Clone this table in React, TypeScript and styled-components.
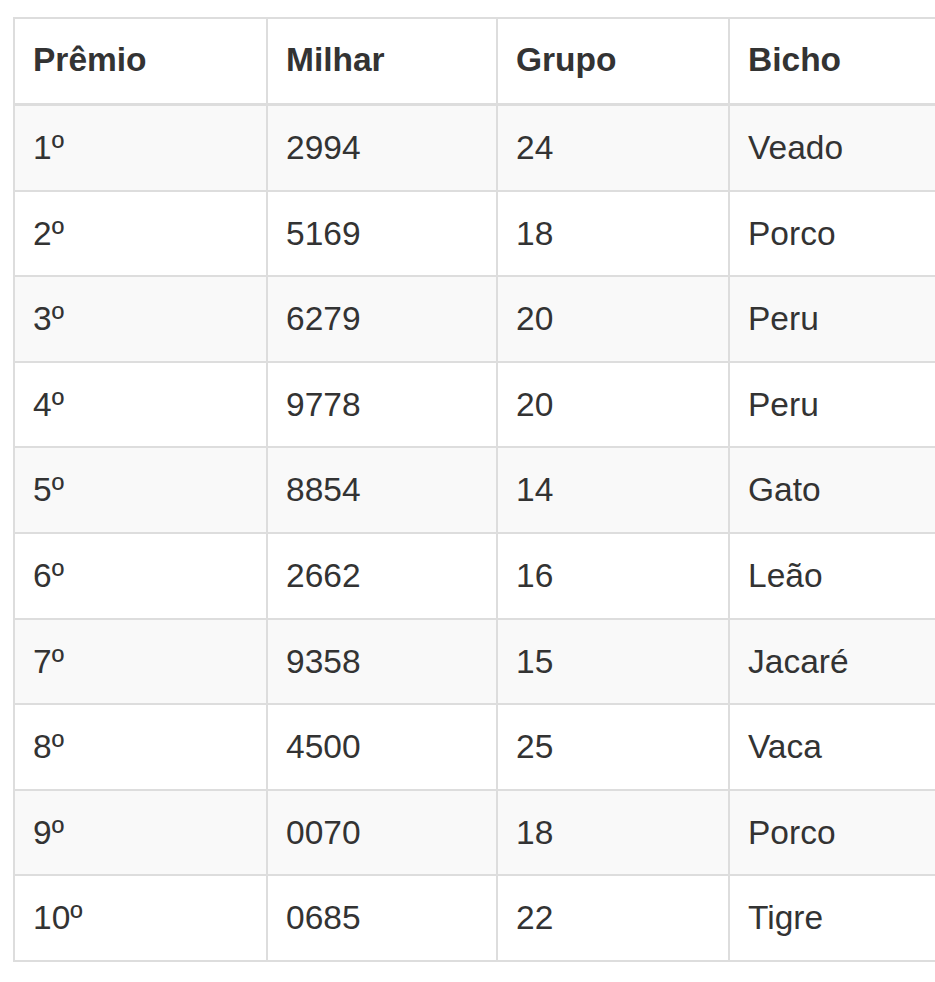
import React from "react";
import styled, { createGlobalStyle } from "styled-components";

const Global = createGlobalStyle`
  html, body {
    margin: 0;
    padding: 0;
    background: #ffffff;
    overflow: hidden;
  }
  body {
    font-family: "Liberation Sans", Arial, sans-serif;
    color: #333333;
  }
`;

const Page = styled.div`
  padding: 17px 0 0 13px;
  width: 922px;
  overflow: hidden;
`;

const Table = styled.table`
  width: 1037px;
  min-width: 1037px;
  border-spacing: 0;
  border-left: 2px solid #dddddd;
  border-top: 2px solid #dddddd;
  table-layout: fixed;
  font-size: 33.5px;
  line-height: 48px;
`;

const HeadCell = styled.th<{ $w: number }>`
  box-sizing: border-box;
  width: ${(p) => p.$w}px;
  height: 87px;
  padding: 17px 17px 0 18px;
  text-align: left;
  vertical-align: top;
  font-weight: 700;
  color: #333333;
  border-right: 2px solid #dddddd;
  border-bottom: 3px solid #dddddd;
`;

const Row = styled.tr<{ $striped: boolean }>`
  background: ${(p) => (p.$striped ? "#f9f9f9" : "#ffffff")};
`;

const Cell = styled.td`
  box-sizing: border-box;
  height: 85.6px;
  padding: 18px 17px 0 18px;
  vertical-align: top;
  font-weight: 400;
  color: #333333;
  border-right: 2px solid #dddddd;
  border-bottom: 2px solid #dddddd;
`;

const columns: { label: string; w: number }[] = [
  { label: "Prêmio", w: 253 },
  { label: "Milhar", w: 230 },
  { label: "Grupo", w: 232 },
  { label: "Bicho", w: 320 },
];

const rows: [string, string, string, string][] = [
  ["1º", "2994", "24", "Veado"],
  ["2º", "5169", "18", "Porco"],
  ["3º", "6279", "20", "Peru"],
  ["4º", "9778", "20", "Peru"],
  ["5º", "8854", "14", "Gato"],
  ["6º", "2662", "16", "Leão"],
  ["7º", "9358", "15", "Jacaré"],
  ["8º", "4500", "25", "Vaca"],
  ["9º", "0070", "18", "Porco"],
  ["10º", "0685", "22", "Tigre"],
];

export default function App() {
  return (
    <>
      <Global />
      <Page>
        <Table>
          <thead>
            <tr>
              {columns.map((c) => (
                <HeadCell key={c.label} $w={c.w}>
                  {c.label}
                </HeadCell>
              ))}
            </tr>
          </thead>
          <tbody>
            {rows.map((r, i) => (
              <Row key={r[0]} $striped={i % 2 === 0}>
                {r.map((v, j) => (
                  <Cell key={j}>{v}</Cell>
                ))}
              </Row>
            ))}
          </tbody>
        </Table>
      </Page>
    </>
  );
}
